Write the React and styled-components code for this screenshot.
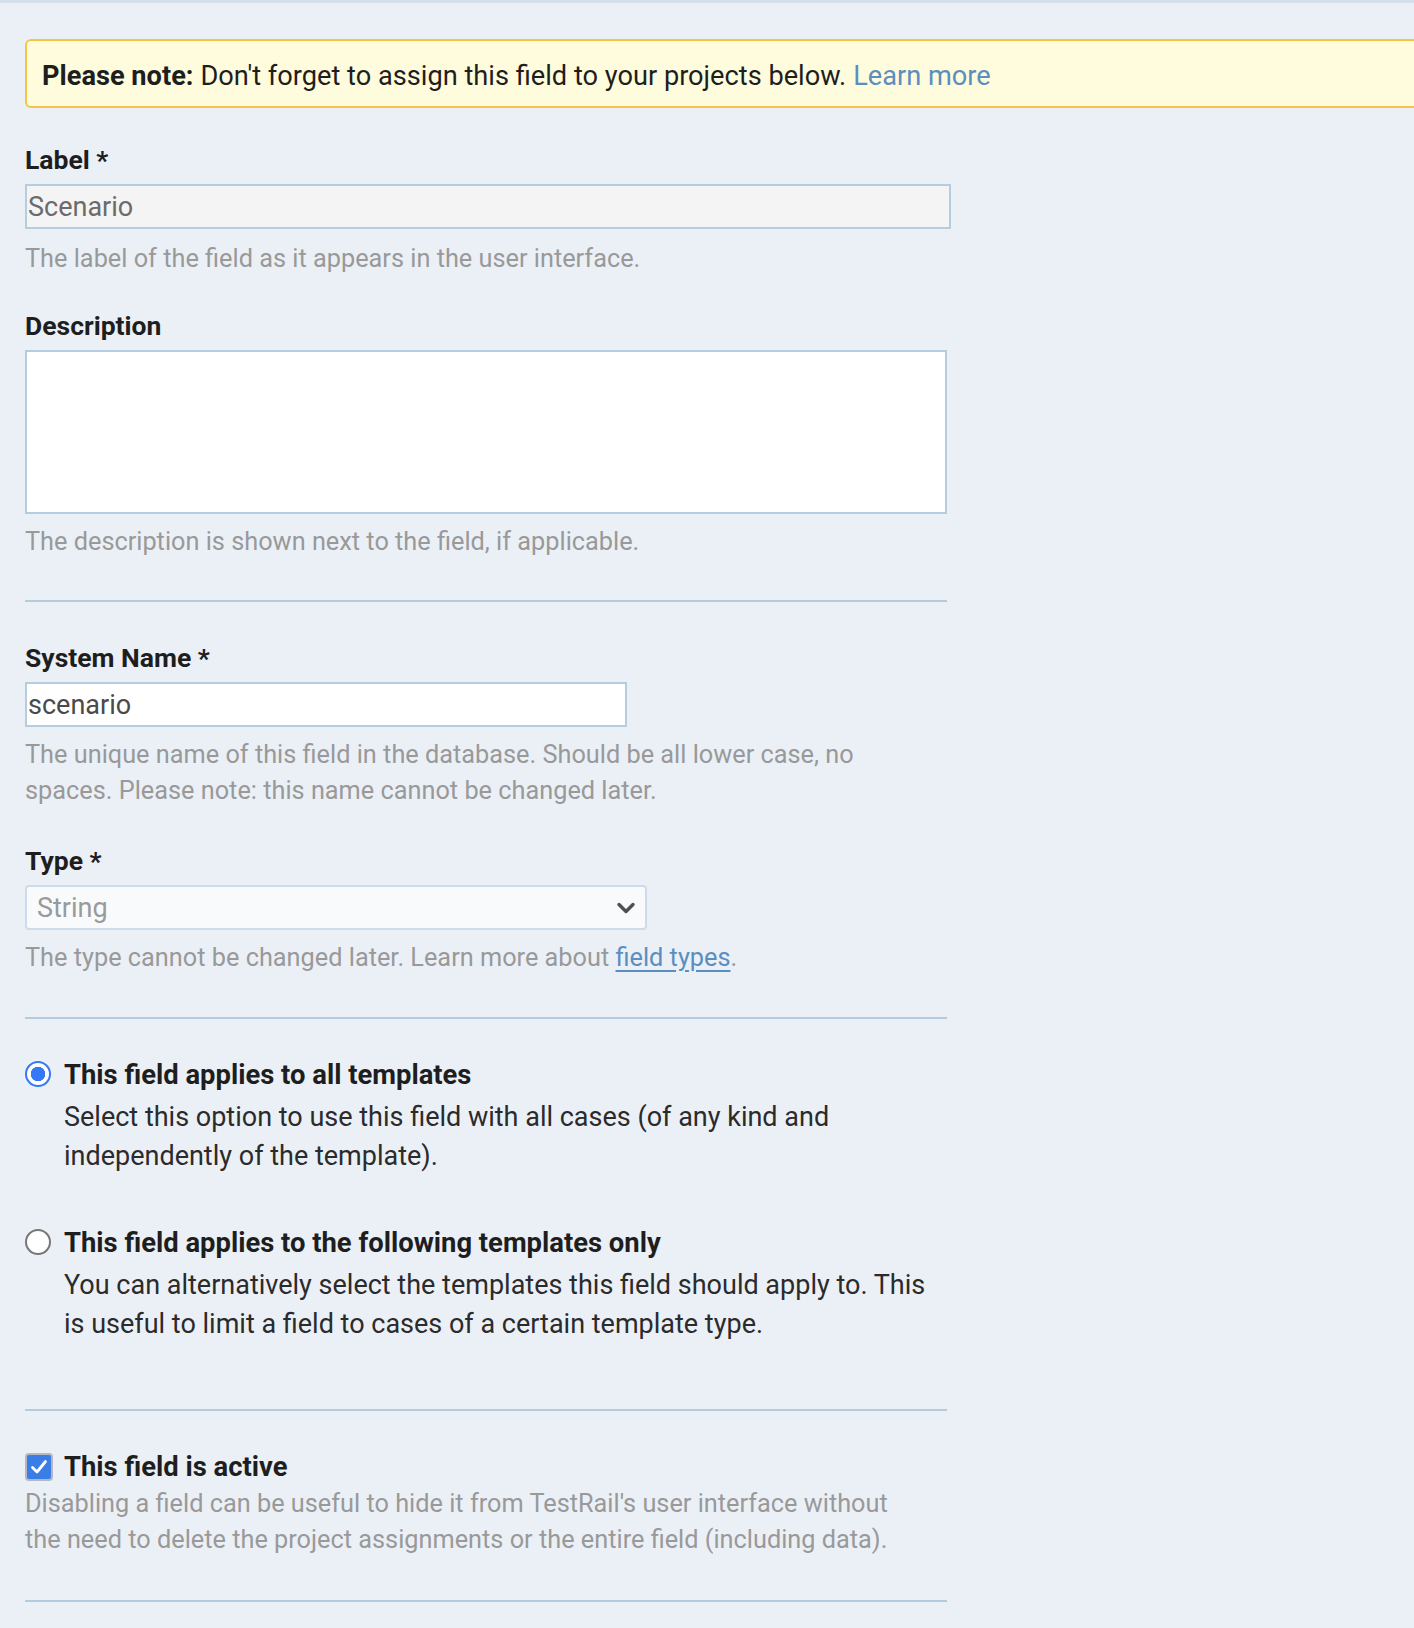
import React from 'react';
import styled, { createGlobalStyle } from 'styled-components';

const GlobalStyle = createGlobalStyle`
  html, body {
    margin: 0;
    padding: 0;
    background: #ebf0f7;
  }
  body {
    font-family: Roboto, "Liberation Sans", Arial, sans-serif;
    color: #1e1e1e;
    overflow-x: hidden;
  }
`;

const Page = styled.div`
  min-height: 1628px;
  border-top: 3px solid #d4dfeb;
  padding: 36px 0 0 25px;
  box-sizing: border-box;
  overflow: hidden;
`;

const Notice = styled.div`
  width: 1420px;
  height: 69px;
  box-sizing: border-box;
  display: flex;
  align-items: center;
  padding: 4px 0 0 15px;
  background: #fefcdc;
  border: 2px solid #f3c546;
  border-radius: 6px;
  font-size: 27.2px;
  color: #1e1e1e;

  b {
    font-weight: 700;
    margin-right: 7px;
  }
`;

const Link = styled.a`
  color: #5b8ec0;
  text-decoration: ${p => (p.$underline ? 'underline' : 'none')};
  text-underline-offset: 4px;
  margin-left: ${p => (p.$gap ? '7px' : '0')};
`;

const Form = styled.div`
  width: 922px;
  padding-top: 37px;
`;

const Field = styled.div`
  display: flex;
  flex-direction: column;
`;

const Label = styled.label`
  font-size: 26.5px;
  font-weight: 700;
  line-height: 30px;
  color: #1e1e1e;
  margin-bottom: 9px;
`;

const TextInput = styled.div`
  width: ${p => p.$width}px;
  height: 45px;
  box-sizing: border-box;
  border: 2px solid #b6cde0;
  background: ${p => (p.$muted ? '#f4f4f4' : '#ffffff')};
  color: ${p => (p.$muted ? '#6b6b6b' : '#4a4a4a')};
  font-size: 27px;
  display: flex;
  align-items: center;
  padding-left: 1px;
`;

const TextArea = styled.div`
  width: 922px;
  height: 164px;
  box-sizing: border-box;
  border: 2px solid #b6cde0;
  background: #ffffff;
`;

const Select = styled.div`
  width: 622px;
  height: 45px;
  box-sizing: border-box;
  border: 2px solid #cddcea;
  border-radius: 4px;
  background: #f9fafc;
  color: #9a9a9a;
  font-size: 27px;
  display: flex;
  align-items: center;
  justify-content: space-between;
  padding: 0 9px 0 10px;
`;

const Help = styled.p`
  margin: ${p => p.$top ?? 10}px 0 0;
  font-size: 25.3px;
  line-height: 36px;
  color: #999999;
  max-width: 872px;
`;

const Divider = styled.hr`
  border: 0;
  height: 2px;
  background: #b4cadd;
  margin: ${p => p.$top}px 0 ${p => p.$bottom}px;
`;

const Gap = styled.div`
  height: ${p => p.$h}px;
`;

const Option = styled.div`
  display: grid;
  grid-template-columns: 39px 1fr;
  align-items: start;
`;

const OptionTitle = styled.div`
  font-size: 27.4px;
  font-weight: 700;
  line-height: 38px;
  color: #1e1e1e;
`;

const OptionText = styled.div`
  margin-top: 4px;
  font-size: 27px;
  line-height: 39px;
  color: #2b2b2b;
  max-width: 872px;
`;

const Radio = styled.span`
  width: 26px;
  height: 26px;
  box-sizing: border-box;
  border-radius: 50%;
  margin-top: 5px;
  border: ${p => (p.$checked ? '2.5px solid #3478f6' : '2px solid #767676')};
  background: ${p => (p.$checked ? 'radial-gradient(circle, #3478f6 0 7px, #ffffff 7.5px)' : '#ffffff')};
`;

const CheckRow = styled.div`
  display: flex;
  align-items: center;
  gap: 11px;
`;

const Checkbox = styled.span`
  width: 28px;
  height: 28px;
  box-sizing: border-box;
  border-radius: 4px;
  border: 2px solid #b3b8c2;
  background: #3b7de6;
  display: flex;
  align-items: center;
  justify-content: center;
`;

const Chevron = () => (
  <svg width="20" height="14" viewBox="0 0 20 14" fill="none">
    <path d="M3 3.5 L10 10.5 L17 3.5" stroke="#4f4f4f" strokeWidth="3.4" strokeLinecap="round" strokeLinejoin="round" />
  </svg>
);

const Check = () => (
  <svg width="18" height="16" viewBox="0 0 18 16" fill="none">
    <path d="M2.5 8.5 L7 13 L15.5 2.5" stroke="#ffffff" strokeWidth="2.8" strokeLinecap="round" strokeLinejoin="round" />
  </svg>
);

export default function App() {
  return (
    <Page>
      <GlobalStyle />
      <Notice>
        <b>Please note:</b>
        Don't forget to assign this field to your projects below.
        <Link href="#" $gap>Learn more</Link>
      </Notice>

      <Form>
        <Field>
          <Label>Label *</Label>
          <TextInput $width={926} $muted>Scenario</TextInput>
          <Help $top={12}>The label of the field as it appears in the user interface.</Help>
        </Field>

        <Gap $h={34} />

        <Field>
          <Label>Description</Label>
          <TextArea />
          <Help $top={10}>The description is shown next to the field, if applicable.</Help>
        </Field>

        <Divider $top={40} $bottom={41} />

        <Field>
          <Label>System Name *</Label>
          <TextInput $width={602}>scenario</TextInput>
          <Help>
            The unique name of this field in the database. Should be all lower case, no spaces. Please note: this name cannot be changed later.
          </Help>
        </Field>

        <Gap $h={37} />

        <Field>
          <Label>Type *</Label>
          <Select>
            String
            <Chevron />
          </Select>
          <Help>
            The type cannot be changed later. Learn more about <Link href="#" $underline>field types</Link>.
          </Help>
        </Field>

        <Divider $top={41} $bottom={37} />

        <Option>
          <Radio $checked />
          <div>
            <OptionTitle>This field applies to all templates</OptionTitle>
            <OptionText>Select this option to use this field with all cases (of any kind and independently of the template).</OptionText>
          </div>
        </Option>

        <Gap $h={48} />

        <Option>
          <Radio />
          <div>
            <OptionTitle>This field applies to the following templates only</OptionTitle>
            <OptionText>You can alternatively select the templates this field should apply to. This is useful to limit a field to cases of a certain template type.</OptionText>
          </div>
        </Option>

        <Divider $top={65} $bottom={37} />

        <Field>
          <CheckRow>
            <Checkbox><Check /></Checkbox>
            <OptionTitle>This field is active</OptionTitle>
          </CheckRow>
          <Help $top={0}>
            Disabling a field can be useful to hide it from TestRail's user interface without the need to delete the project assignments or the entire field (including data).
          </Help>
        </Field>

        <Divider $top={42} $bottom={0} />
      </Form>
    </Page>
  );
}
